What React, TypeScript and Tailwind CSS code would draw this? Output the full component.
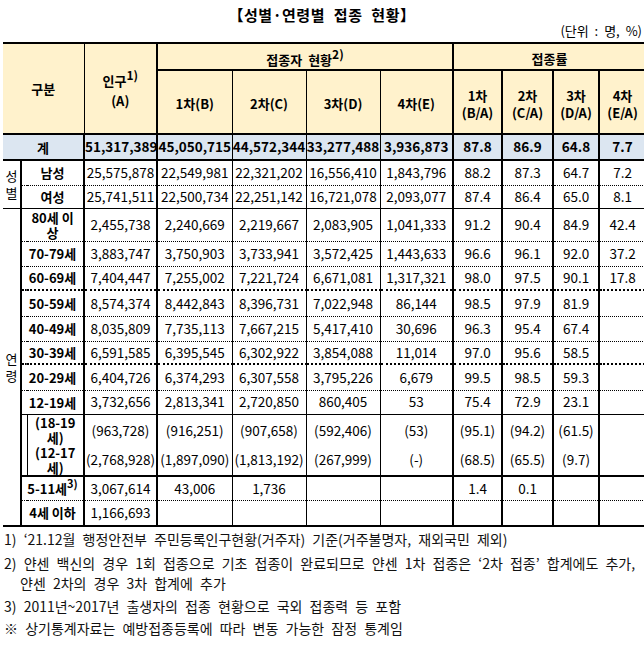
import type { ReactNode } from 'react';

const DATA_R = ['border-r-2', 'border-r', 'border-r', 'border-r', 'border-r-2', 'border-r-2', 'border-r-2', 'border-r-2', ''];

const BOTTOM = {
  dot1: 'border-b [border-bottom-style:dotted]',
  dot2: 'border-b-2 [border-bottom-style:dotted]',
  solid1: 'border-b',
  solid2: 'border-b-2',
};

type Row = { label: ReactNode; vals: ReactNode[]; b: keyof typeof BOTTOM; h: string };

const GENDER: Row[] = [
  { label: '남성', vals: ['25,575,878', '22,549,981', '22,321,202', '16,556,410', '1,843,796', '88.2', '87.3', '64.7', '7.2'], b: 'dot1', h: 'h-[25px]' },
  { label: '여성', vals: ['25,741,511', '22,500,734', '22,251,142', '16,721,078', '2,093,077', '87.4', '86.4', '65.0', '8.1'], b: 'solid1', h: 'h-[23px]' },
];

const AGE: Row[] = [
  { label: <span className="block leading-[15px]">80세 이<br />상</span>, vals: ['2,455,738', '2,240,669', '2,219,667', '2,083,905', '1,041,333', '91.2', '90.4', '84.9', '42.4'], b: 'dot1', h: 'h-[33px]' },
  { label: '70-79세', vals: ['3,883,747', '3,750,903', '3,733,941', '3,572,425', '1,443,633', '96.6', '96.1', '92.0', '37.2'], b: 'dot1', h: 'h-[25px]' },
  { label: '60-69세', vals: ['7,404,447', '7,255,002', '7,221,724', '6,671,081', '1,317,321', '98.0', '97.5', '90.1', '17.8'], b: 'dot2', h: 'h-[24px]' },
  { label: '50-59세', vals: ['8,574,374', '8,442,843', '8,396,731', '7,022,948', '86,144', '98.5', '97.9', '81.9', ''], b: 'dot1', h: 'h-[26px]' },
  { label: '40-49세', vals: ['8,035,809', '7,735,113', '7,667,215', '5,417,410', '30,696', '96.3', '95.4', '67.4', ''], b: 'dot1', h: 'h-[25px]' },
  { label: '30-39세', vals: ['6,591,585', '6,395,545', '6,302,922', '3,854,088', '11,014', '97.0', '95.6', '58.5', ''], b: 'dot2', h: 'h-[23px]' },
  { label: '20-29세', vals: ['6,404,726', '6,374,293', '6,307,558', '3,795,226', '6,679', '99.5', '98.5', '59.3', ''], b: 'dot1', h: 'h-[26px]' },
  { label: '12-19세', vals: ['3,732,656', '2,813,341', '2,720,850', '860,405', '53', '75.4', '72.9', '23.1', ''], b: 'solid1', h: 'h-[24px]' },
];

const SUB = [
  ['(963,728)', '(2,768,928)'], ['(916,251)', '(1,897,090)'], ['(907,658)', '(1,813,192)'], ['(592,406)', '(267,999)'],
  ['(53)', '(-)'], ['(95.1)', '(68.5)'], ['(94.2)', '(65.5)'], ['(61.5)', '(9.7)'], ['', ''],
];

const TAIL: Row[] = [
  { label: <>5-11세<sup className="text-[11px]">3)</sup></>, vals: ['3,067,614', '43,006', '1,736', '', '', '1.4', '0.1', '', ''], b: 'dot1', h: 'h-[24px]' },
  { label: '4세 이하', vals: ['1,166,693', '', '', '', '', '', '', '', ''], b: 'solid2', h: 'h-[26px]' },
];

function Cells({ vals, b, bold }: { vals: ReactNode[]; b: keyof typeof BOTTOM; bold?: boolean }) {
  return (
    <>
      {vals.map((v, i) => (
        <td key={i} className={`border-black ${DATA_R[i]} ${BOTTOM[b]} p-0 text-center whitespace-nowrap ${bold ? 'font-bold' : ''}`}>
          {v}
        </td>
      ))}
    </>
  );
}

function Label({ children, b, span = 2 }: { children: ReactNode; b: keyof typeof BOTTOM; span?: number }) {
  return (
    <td colSpan={span} className={`border-black border-r-2 ${BOTTOM[b]} p-0 text-center font-bold text-[13px] whitespace-nowrap`}>
      {children}
    </td>
  );
}

export default function App() {
  return (
    <div className="w-[644px] h-[648px] overflow-hidden bg-white text-black font-['Noto_Sans_CJK_KR','Noto_Sans',sans-serif]">
      <div className="mt-[6px] h-[18px] leading-[18px] text-center text-[15px] font-bold tracking-[0.5px] [word-spacing:5px]">【성별·연령별 접종 현황】</div>
      <div className="h-[14px] leading-[14px] mb-[4px] pr-[2px] text-right text-[13px] [word-spacing:3px]">(단위 : 명, %)</div>

      <table className="ml-[3px] w-[642px] table-fixed border-collapse text-[13.5px] leading-none">
        <colgroup>
          <col className="w-[18px]" />
          <col className="w-[6px]" />
          <col className="w-[57px]" />
          <col className="w-[73px]" />
          <col className="w-[75px]" />
          <col className="w-[74px]" />
          <col className="w-[74px]" />
          <col className="w-[73px]" />
          <col className="w-[49px]" />
          <col className="w-[51px]" />
          <col className="w-[46px]" />
          <col className="w-[46px]" />
        </colgroup>
        <thead className="bg-[#fff2cc] font-bold text-[13px]">
          <tr className="h-[27px] border-t-2 border-black">
            <th rowSpan={2} colSpan={3} className="border-black border-r border-b-2 p-0 font-bold">구분</th>
            <th rowSpan={2} className="border-black border-r-2 border-b-2 p-0 font-bold leading-[20px] pt-[4px]">
              인구<sup className="text-[12px]">1)</sup><br />(A)
            </th>
            <th colSpan={4} className="border-black border-r-2 border-b-2 p-0 pt-[5px] font-bold [word-spacing:3px]">
              접종자 현황<sup className="text-[12px]">2)</sup>
            </th>
            <th colSpan={4} className="border-black border-b-2 p-0 pt-[4px] font-bold">접종률</th>
          </tr>
          <tr className="h-[64px]">
            <th className="border-black border-r border-b-2 p-0 pt-[3px] font-bold">1차(B)</th>
            <th className="border-black border-r border-b-2 p-0 pt-[3px] font-bold">2차(C)</th>
            <th className="border-black border-r border-b-2 p-0 pt-[3px] font-bold">3차(D)</th>
            <th className="border-black border-r-2 border-b-2 p-0 pt-[3px] font-bold">4차(E)</th>
            <th className="border-black border-r-2 border-b-2 p-0 pt-[3px] font-bold leading-[17px]">1차<br />(B/A)</th>
            <th className="border-black border-r-2 border-b-2 p-0 pt-[3px] font-bold leading-[17px]">2차<br />(C/A)</th>
            <th className="border-black border-r-2 border-b-2 p-0 pt-[3px] font-bold leading-[17px]">3차<br />(D/A)</th>
            <th className="border-black border-b-2 p-0 pt-[3px] font-bold leading-[17px]">4차<br />(E/A)</th>
          </tr>
        </thead>
        <tbody>
          <tr className="h-[26px] bg-[#dce6f1]">
            <Label b="solid2" span={3}>계</Label>
            <Cells vals={['51,317,389', '45,050,715', '44,572,344', '33,277,488', '3,936,873', '87.8', '86.9', '64.8', '7.7']} b="solid2" bold />
          </tr>

          {GENDER.map((r, i) => (
            <tr key={i} className={r.h}>
              {i === 0 && (
                <td rowSpan={2} className="border-black border-r-2 border-b p-0 text-center text-[13px] leading-[17px]">
                  성<br />별
                </td>
              )}
              <Label b={r.b}>{r.label}</Label>
              <Cells vals={r.vals} b={r.b} />
            </tr>
          ))}

          {AGE.map((r, i) => (
            <tr key={i} className={r.h}>
              {i === 0 && (
                <td rowSpan={11} className="border-black border-r-2 border-b-2 p-0 text-center text-[13px] leading-[17px]">
                  연<br />령
                </td>
              )}
              <Label b={r.b}>{r.label}</Label>
              <Cells vals={r.vals} b={r.b} />
            </tr>
          ))}

          <tr className="h-[62px]">
            <td className="border-black border-r border-b-2 p-0" />
            <td className="border-black border-r-2 border-b-2 p-0 text-center font-bold text-[13px] leading-[15px]">
              (18-19<br />세)<br />(12-17<br />세)
            </td>
            {SUB.map((v, i) => (
              <td key={i} className={`border-black ${DATA_R[i]} border-b-2 p-0 text-center whitespace-nowrap leading-[29px]`}>
                {v[0]}<br />{v[1]}
              </td>
            ))}
          </tr>

          {TAIL.map((r, i) => (
            <tr key={i} className={r.h}>
              <Label b={r.b}>{r.label}</Label>
              <Cells vals={r.vals} b={r.b} />
            </tr>
          ))}
        </tbody>
      </table>

      <div className="pl-[4px] text-[14px] text-[#111] whitespace-nowrap [word-spacing:4px]">
        <div className="h-[24px] leading-[24px]">1) ‘21.12월 행정안전부 주민등록인구현황(거주자) 기준(거주불명자, 재외국민 제외)</div>
        <div className="pt-[2px] leading-[20px]">
          <div>2) 얀센 백신의 경우 1회 접종으로 기초 접종이 완료되므로 얀센 1차 접종은 ‘2차 접종’ 합계에도 추가,</div>
          <div className="pl-[16px]">얀센 2차의 경우 3차 합계에 추가</div>
        </div>
        <div className="h-[26px] leading-[26px]">3) 2011년~2017년 출생자의 접종 현황으로 국외 접종력 등 포함</div>
        <div className="h-[18px] leading-[18px]">※ 상기통계자료는 예방접종등록에 따라 변동 가능한 잠정 통계임</div>
      </div>
    </div>
  );
}
